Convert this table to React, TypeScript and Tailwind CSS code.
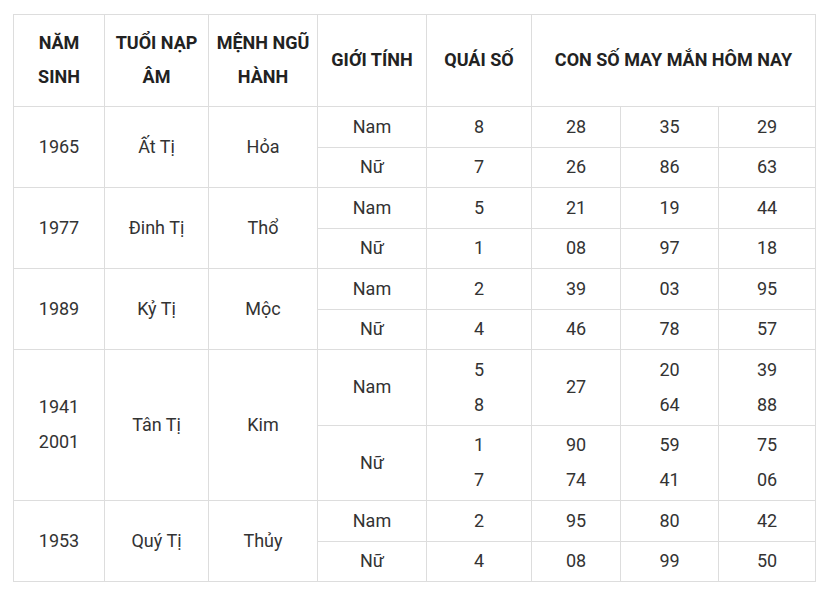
import React from "react";

const B = "border border-[#dddddd]";

function Cell({
  children,
  rowSpan,
  colSpan,
  className = "",
}: {
  children: React.ReactNode;
  rowSpan?: number;
  colSpan?: number;
  className?: string;
}) {
  return (
    <td rowSpan={rowSpan} colSpan={colSpan} className={`${B} p-0 pb-[2px] text-center align-middle ${className}`}>
      {children}
    </td>
  );
}

function Stack({ items }: { items: string[] }) {
  return (
    <div className="flex flex-col">
      {items.map((t, i) => (
        <div key={i} className="leading-[35px]">
          {t}
        </div>
      ))}
    </div>
  );
}

type Group = {
  year: string[];
  tuoi: string;
  menh: string;
  rows: { gt: string; qs: string[]; n: string[][]; h: string }[];
};

const groups: Group[] = [
  {
    year: ["1965"],
    tuoi: "Ất Tị",
    menh: "Hỏa",
    rows: [
      { gt: "Nam", qs: ["8"], n: [["28"], ["35"], ["29"]], h: "h-[41px]" },
      { gt: "Nữ", qs: ["7"], n: [["26"], ["86"], ["63"]], h: "h-[40px]" },
    ],
  },
  {
    year: ["1977"],
    tuoi: "Đinh Tị",
    menh: "Thổ",
    rows: [
      { gt: "Nam", qs: ["5"], n: [["21"], ["19"], ["44"]], h: "h-[41px]" },
      { gt: "Nữ", qs: ["1"], n: [["08"], ["97"], ["18"]], h: "h-[40px]" },
    ],
  },
  {
    year: ["1989"],
    tuoi: "Kỷ Tị",
    menh: "Mộc",
    rows: [
      { gt: "Nam", qs: ["2"], n: [["39"], ["03"], ["95"]], h: "h-[41px]" },
      { gt: "Nữ", qs: ["4"], n: [["46"], ["78"], ["57"]], h: "h-[40px]" },
    ],
  },
  {
    year: ["1941", "2001"],
    tuoi: "Tân Tị",
    menh: "Kim",
    rows: [
      { gt: "Nam", qs: ["5", "8"], n: [["27"], ["20", "64"], ["39", "88"]], h: "h-[76px]" },
      { gt: "Nữ", qs: ["1", "7"], n: [["90", "74"], ["59", "41"], ["75", "06"]], h: "h-[75px]" },
    ],
  },
  {
    year: ["1953"],
    tuoi: "Quý Tị",
    menh: "Thủy",
    rows: [
      { gt: "Nam", qs: ["2"], n: [["95"], ["80"], ["42"]], h: "h-[41px]" },
      { gt: "Nữ", qs: ["4"], n: [["08"], ["99"], ["50"]], h: "h-[40px]" },
    ],
  },
];

export default function App() {
  return (
    <div
      className="w-[821px] h-[603px] bg-white pl-[13px] pt-[14px] text-[18px] text-[#333333]"
      style={{ fontFamily: "Roboto, 'Noto Sans', sans-serif" }}
    >
      <table className="table-fixed border-collapse w-[802px]">
        <colgroup>
          <col className="w-[91px]" />
          <col className="w-[104px]" />
          <col className="w-[109px]" />
          <col className="w-[109px]" />
          <col className="w-[105px]" />
          <col className="w-[89px]" />
          <col className="w-[98px]" />
          <col className="w-[97px]" />
        </colgroup>
        <thead>
          <tr className="h-[92px]">
            <Cell className="font-bold text-[#222222]">
              <div className="leading-[34px]">NĂM</div>
              <div className="leading-[34px]">SINH</div>
            </Cell>
            <Cell className="font-bold text-[#222222]">
              <div className="leading-[34px]">TUỔI NẠP</div>
              <div className="leading-[34px]">ÂM</div>
            </Cell>
            <Cell className="font-bold text-[#222222]">
              <div className="leading-[34px]">MỆNH NGŨ</div>
              <div className="leading-[34px]">HÀNH</div>
            </Cell>
            <Cell className="font-bold text-[#222222]">GIỚI TÍNH</Cell>
            <Cell className="font-bold text-[#222222]">QUÁI SỐ</Cell>
            <Cell colSpan={3} className="font-bold text-[#222222]">
              CON SỐ MAY MẮN HÔM NAY
            </Cell>
          </tr>
        </thead>
        <tbody>
          {groups.map((g, gi) =>
            g.rows.map((r, ri) => (
              <tr key={`${gi}-${ri}`} className={r.h}>
                {ri === 0 && (
                  <>
                    <Cell rowSpan={2}>
                      <Stack items={g.year} />
                    </Cell>
                    <Cell rowSpan={2}>{g.tuoi}</Cell>
                    <Cell rowSpan={2}>{g.menh}</Cell>
                  </>
                )}
                <Cell>{r.gt}</Cell>
                <Cell>
                  <Stack items={r.qs} />
                </Cell>
                {r.n.map((nn, ni) => (
                  <Cell key={ni}>
                    <Stack items={nn} />
                  </Cell>
                ))}
              </tr>
            ))
          )}
        </tbody>
      </table>
    </div>
  );
}
